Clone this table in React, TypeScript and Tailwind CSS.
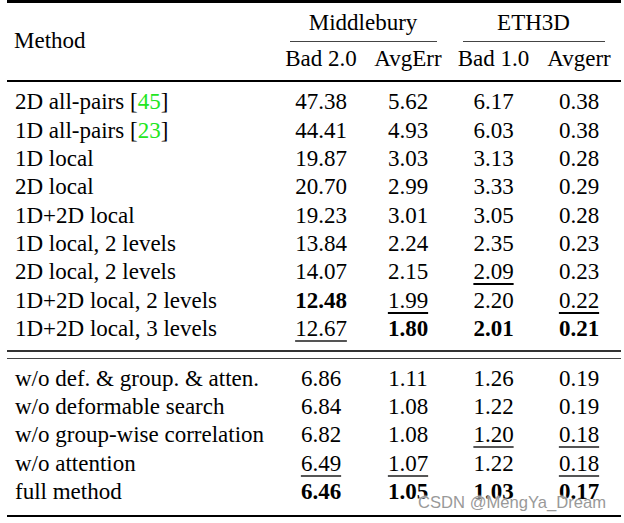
type Val = { v: string; b?: boolean; u?: "thick" | "thin" }

type Row = { label: React.ReactNode; vals: Val[] }

const n = (v: string): Val => ({ v })
const b = (v: string): Val => ({ v, b: true })
const uk = (v: string): Val => ({ v, u: "thick" })
const ut = (v: string): Val => ({ v, u: "thin" })

// width of every data column, left to right
const cols = ["w-[90px]", "w-[84px]", "w-[87px]", "w-[84px]"]

const Cite = ({ id }: { id: string }) => (
  <>
    [<span className="text-[#22e622]">{id}</span>]
  </>
)

const upper: Row[] = [
  { label: <>2D all-pairs <Cite id="45" /></>, vals: [n("47.38"), n("5.62"), n("6.17"), n("0.38")] },
  { label: <>1D all-pairs <Cite id="23" /></>, vals: [n("44.41"), n("4.93"), n("6.03"), n("0.38")] },
  { label: "1D local", vals: [n("19.87"), n("3.03"), n("3.13"), n("0.28")] },
  { label: "2D local", vals: [n("20.70"), n("2.99"), n("3.33"), n("0.29")] },
  { label: "1D+2D local", vals: [n("19.23"), n("3.01"), n("3.05"), n("0.28")] },
  { label: "1D local, 2 levels", vals: [n("13.84"), n("2.24"), n("2.35"), n("0.23")] },
  { label: "2D local, 2 levels", vals: [n("14.07"), n("2.15"), uk("2.09"), n("0.23")] },
  { label: "1D+2D local, 2 levels", vals: [b("12.48"), uk("1.99"), n("2.20"), uk("0.22")] },
  { label: "1D+2D local, 3 levels", vals: [ut("12.67"), b("1.80"), b("2.01"), b("0.21")] },
]

const lower: Row[] = [
  { label: "w/o def. & group. & atten.", vals: [n("6.86"), n("1.11"), n("1.26"), n("0.19")] },
  { label: "w/o deformable search", vals: [n("6.84"), n("1.08"), n("1.22"), n("0.19")] },
  { label: "w/o group-wise correlation", vals: [n("6.82"), n("1.08"), ut("1.20"), ut("0.18")] },
  { label: "w/o attention", vals: [ut("6.49"), ut("1.07"), n("1.22"), ut("0.18")] },
  { label: "full method", vals: [b("6.46"), b("1.05"), b("1.03"), b("0.17")] },
]

function Cell({ val, w }: { val: Val; w: string }) {
  const deco =
    val.u === "thick"
      ? "underline decoration-[2px] decoration-black underline-offset-[4px]"
      : val.u === "thin"
      ? "underline decoration-[1.5px] decoration-[#555] underline-offset-[4px]"
      : ""
  return (
    <div className={`${w} text-center`}>
      <span className={`${val.b ? "font-bold" : ""} ${deco}`}>{val.v}</span>
    </div>
  )
}

function Rows({ rows }: { rows: Row[] }) {
  return (
    <div className="flex flex-col">
      {rows.map((r, i) => (
        <div key={i} className="flex h-[28.4px]">
          <div className="w-[269px] pl-[8px] whitespace-nowrap">{r.label}</div>
          {r.vals.map((v, j) => (
            <Cell key={j} val={v} w={cols[j]} />
          ))}
        </div>
      ))}
    </div>
  )
}

export default function App() {
  return (
    <div className="relative w-[624px] h-[523px] bg-white overflow-hidden pl-[7px] text-black text-[23px] leading-[28.4px] [font-family:'Liberation_Serif','Times_New_Roman',serif]">
      <div className="w-[614px]">
        <div className="h-[3px] bg-black" />

        {/* header */}
        <div className="flex pt-[6px]">
          <div className="w-[269px] pl-[7px] flex items-center">Method</div>
          <div className="flex flex-col w-[174px]">
            <div className="text-center">Middlebury</div>
            <div className="mt-[4px] ml-[14px] mr-[13px] h-px bg-[#444]" />
            <div className="flex mt-[2.3px]">
              <div className={`${cols[0]} text-center`}>Bad 2.0</div>
              <div className={`${cols[1]} text-center`}>AvgErr</div>
            </div>
          </div>
          <div className="flex flex-col w-[171px]">
            <div className="text-center pr-[4px]">ETH3D</div>
            <div className="mt-[4px] ml-[13px] mr-[16px] h-px bg-[#444]" />
            <div className="flex mt-[2.3px]">
              <div className={`${cols[2]} text-center`}>Bad 1.0</div>
              <div className={`${cols[3]} text-center`}>Avgerr</div>
            </div>
          </div>
        </div>

        <div className="mt-[7px] h-[1.5px] bg-black" />
        <div className="mt-[6.5px]">
          <Rows rows={upper} />
        </div>

        {/* double rule between blocks */}
        <div className="mt-[6.4px] h-[2px] bg-[#333]" />
        <div className="mt-[5.5px] h-[1.5px] bg-[#444]" />

        <div className="mt-[5.5px]">
          <Rows rows={lower} />
        </div>
        <div className="mt-[8.3px] h-[2.5px] bg-black" />
      </div>

      <div className="absolute left-[418px] top-[495px] text-[16.6px] leading-none text-[#999] [font-family:'Liberation_Sans',Arial,sans-serif] [text-shadow:0_0_2px_white,0_0_2px_white]">
        CSDN @MengYa_Dream
      </div>
    </div>
  )
}
